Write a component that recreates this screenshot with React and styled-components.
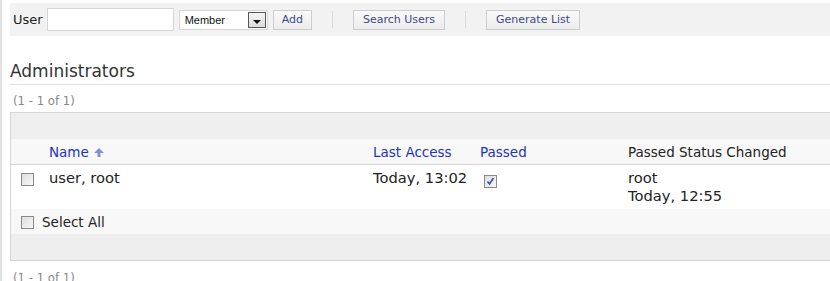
import React from "react";
import styled, { createGlobalStyle } from "styled-components";

const Global = createGlobalStyle`
  html, body { margin: 0; padding: 0; background: #fff; overflow: hidden; }
  body { font-family: "DejaVu Sans", Verdana, sans-serif; color: #222; }
`;

const Page = styled.div`
  border-left: 2px solid #e2e2e2;
  padding: 3px 0 0 8px;
  min-height: 281px;
  box-sizing: border-box;
  width: 860px;
`;

const Toolbar = styled.div`
  display: flex;
  align-items: center;
  height: 33px;
  background: #f2f2f2;
  padding-left: 3px;
`;

const Label = styled.label`
  font-size: 13px;
  color: #222;
  margin-right: 4px;
`;

const TextInput = styled.input`
  box-sizing: border-box;
  width: 127px;
  height: 23px;
  border: 1px solid #d6d6d6;
  background: #fff;
  margin: 0 5px 0 0;
  padding: 0 3px;
  outline: none;
`;

const SelectBox = styled.div`
  box-sizing: border-box;
  width: 89px;
  height: 20px;
  border: 1px solid #d6d6d6;
  background: #fff;
  display: flex;
  align-items: center;
  justify-content: space-between;
  padding: 0 1px 0 5px;
  margin-right: 5px;
  font-family: "Liberation Sans", Arial, sans-serif;
  font-size: 11px;
  color: #111;
`;

const DropButton = styled.span`
  box-sizing: border-box;
  width: 18px;
  height: 16px;
  border: 1px solid #555;
  background: linear-gradient(#f4f4f4, #dcdcdc);
  display: flex;
  align-items: flex-end;
  justify-content: center;
  padding-bottom: 3px;
  &::after {
    content: "";
    border-left: 4px solid transparent;
    border-right: 4px solid transparent;
    border-top: 4px solid #111;
  }
`;

const Button = styled.button`
  box-sizing: border-box;
  height: 20px;
  border: 1px solid #cdcdcd;
  background: linear-gradient(#fafafa, #ececec);
  color: #3a4a86;
  font-family: "DejaVu Sans", Verdana, sans-serif;
  font-size: 11px;
  padding: 0 ${(p) => p.$pad || 9}px;
  cursor: pointer;
  border-radius: 0;
`;

const Sep = styled.span`
  width: 1px;
  height: 17px;
  background: #dadada;
  margin: 0 20px;
`;

const Title = styled.h2`
  margin: 25px 0 0;
  font-size: 17px;
  font-weight: normal;
  line-height: 20px;
  color: #333;
  padding-bottom: 3px;
  border-bottom: 1px solid #e2e2e2;
`;

const Count = styled.div`
  font-size: 11.7px;
  line-height: 14px;
  color: #888;
  padding-left: 3px;
  margin: ${(p) => p.$m};
`;

const Table = styled.div`
  border: 1px solid #d6d6d6;
  border-right: none;
  display: grid;
  grid-template-columns: 38px 324px 107px 148px 1fr;
`;

const Band = styled.div`
  grid-column: 1 / -1;
  height: ${(p) => p.$h}px;
  background: ${(p) => p.$bg};
  border-bottom: ${(p) => (p.$border ? "1px solid #d6d6d6" : "none")};
`;

const HeadCell = styled.div`
  height: 24px;
  background: #f8f8f8;
  border-bottom: 1px solid #d6d6d6;
  font-size: 13.5px;
  line-height: 24px;
  padding-top: 1px;
  box-sizing: content-box;
  margin-top: -1px;
  color: ${(p) => (p.$link ? "#2233bb" : "#222")};
  display: flex;
  align-items: center;
  gap: 5px;
`;

const Cell = styled.div`
  height: 44px;
  box-sizing: border-box;
  padding-top: ${(p) => p.$pt ?? 4}px;
  padding-left: ${(p) => p.$pl || 0}px;
  font-size: 14.7px;
  line-height: 18px;
  color: #222;
`;

const SelectAllRow = styled.div`
  grid-column: 1 / -1;
  height: 25px;
  box-sizing: border-box;
  padding: 1px 0 0 10px;
  background: #f8f8f8;
  display: flex;
  align-items: center;
  gap: 8px;
  font-size: 13.5px;
  color: #222;
`;

const Box = styled.span`
  box-sizing: border-box;
  display: inline-flex;
  align-items: center;
  justify-content: center;
  width: 13px;
  height: 13px;
  border: 1px solid #8a8a8a;
  background: linear-gradient(135deg, #dedede, #f8f8f8);
  flex: none;
`;

const Check = ({ checked }) => (
  <Box>
    {checked && (
      <svg width="9" height="9" viewBox="0 0 9 9">
        <path d="M1.5 4.5 L3.5 7 L7.5 1" fill="none" stroke="#3b4fa8" strokeWidth="1.6" />
      </svg>
    )}
  </Box>
);

const UpArrow = () => (
  <svg width="10" height="9" viewBox="0 0 10 9">
    <path d="M5 0 L10 5 H6.5 V9 H3.5 V5 H0 Z" fill="#7e93d6" />
  </svg>
);

export default function App() {
  return (
    <>
      <Global />
      <Page>
        <Toolbar>
          <Label>User</Label>
          <TextInput />
          <SelectBox>
            <span>Member</span>
            <DropButton />
          </SelectBox>
          <Button $pad={8}>Add</Button>
          <Sep />
          <Button>Search Users</Button>
          <Sep />
          <Button>Generate List</Button>
        </Toolbar>

        <Title>Administrators</Title>
        <Count $m="9px 0 4px">(1 - 1 of 1)</Count>

        <Table>
          <Band $h={26} $bg="#efefef" $border />
          <HeadCell />
          <HeadCell $link>
            Name <UpArrow />
          </HeadCell>
          <HeadCell $link>Last Access</HeadCell>
          <HeadCell $link>Passed</HeadCell>
          <HeadCell>Passed Status Changed</HeadCell>

          <Cell $pt={7} $pl={10}>
            <Check />
          </Cell>
          <Cell>user, root</Cell>
          <Cell>Today, 13:02</Cell>
          <Cell $pt={7} $pl={4}>
            <Check checked />
          </Cell>
          <Cell>
            root
            <br />
            Today, 12:55
          </Cell>

          <SelectAllRow>
            <Check />
            Select All
          </SelectAllRow>
          <Band $h={26} $bg="#eeeeee" />
        </Table>
        <Count $m="10px 0 0">(1 - 1 of 1)</Count>
      </Page>
    </>
  );
}
